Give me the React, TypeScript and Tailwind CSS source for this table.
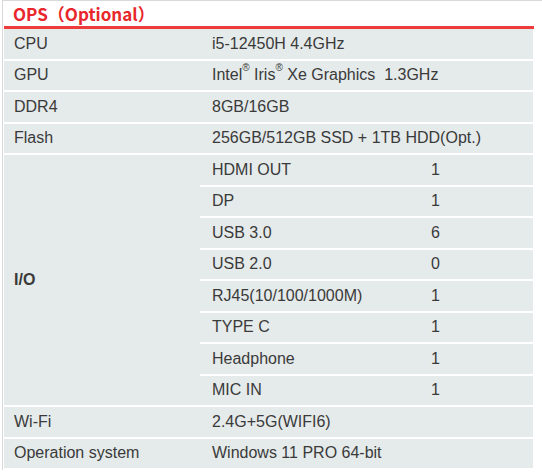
import React from 'react';

const specs: [string, React.ReactNode][] = [
  ['CPU', 'i5-12450H 4.4GHz'],
  [
    'GPU',
    <>
      Intel<sup className="text-[10px] align-[4px]">®</sup> Iris<sup className="text-[10px] align-[4px]">®</sup> Xe Graphics&nbsp;&nbsp;1.3GHz
    </>,
  ],
  ['DDR4', '8GB/16GB'],
  ['Flash', '256GB/512GB SSD + 1TB HDD(Opt.)'],
];

const ports: [string, string][] = [
  ['HDMI OUT', '1'],
  ['DP', '1'],
  ['USB 3.0', '6'],
  ['USB 2.0', '0'],
  ['RJ45(10/100/1000M)', '1'],
  ['TYPE C', '1'],
  ['Headphone', '1'],
  ['MIC IN', '1'],
];

const tail: [string, string][] = [
  ['Wi-Fi', '2.4G+5G(WIFI6)'],
  ['Operation system', 'Windows 11 PRO 64-bit'],
];

const Row: React.FC<{ label: string; value: React.ReactNode }> = ({ label, value }) => (
  <div className="flex h-[29.5px] items-center bg-[#e5eaea]">
    <div className="w-[196px] pl-[10px]">{label}</div>
    <div className="pl-[12px]">{value}</div>
  </div>
);

const App: React.FC = () => {
  return (
    <div className="w-[542px] h-[476px] bg-white font-['Liberation_Sans',sans-serif] text-[16px] text-[#3a3a3a]">
      <div className="ml-[2px] h-[470px] border-l border-t border-[#d9d9d9]">
        {/* Title */}
        <div className="h-[25px] pl-[10px] font-['Noto_Sans_CJK_SC',sans-serif] text-[17px] font-bold leading-[25px] text-[#e8262b]">
          OPS（Optional）
        </div>
        <div className="ml-[1px] w-[530px] h-[3px] bg-[#ee3b3b]" />

        {/* Table */}
        <div className="ml-[1px] w-[529px] flex flex-col gap-[2px]">
          {specs.map(([l, v]) => (
            <Row key={l} label={l} value={v} />
          ))}

          <div className="flex">
            <div className="w-[196px] pl-[10px] flex items-center bg-[#e5eaea] font-bold">I/O</div>
            <div className="flex-1 flex flex-col gap-[2px]">
              {ports.map(([name, n]) => (
                <div key={name} className="flex h-[29.5px] items-center bg-[#e5eaea]">
                  <div className="w-[231px] pl-[12px]">{name}</div>
                  <div>{n}</div>
                </div>
              ))}
            </div>
          </div>

          {tail.map(([l, v]) => (
            <Row key={l} label={l} value={v} />
          ))}
        </div>
      </div>
    </div>
  );
};

export default App;
